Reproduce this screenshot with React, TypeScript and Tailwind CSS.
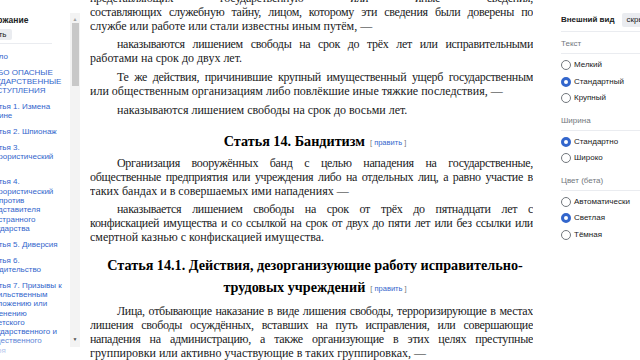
import React from "react";

type TocItem = { level: 1 | 2; lines: string[] };

const toc: TocItem[] = [
  { level: 1, lines: ["Начало"] },
  { level: 1, lines: ["ОСОБО ОПАСНЫЕ", "ГОСУДАРСТВЕННЫЕ", "ПРЕСТУПЛЕНИЯ"] },
  { level: 2, lines: ["Статья 1. Измена", "Родине"] },
  { level: 2, lines: ["Статья 2. Шпионаж"] },
  { level: 2, lines: ["Статья 3.", "Террористический", "акт"] },
  {
    level: 2,
    lines: ["Статья 4.", "Террористический", "акт против", "представителя", "иностранного", "государства"],
  },
  { level: 2, lines: ["Статья 5. Диверсия"] },
  { level: 2, lines: ["Статья 6.", "Вредительство"] },
  {
    level: 2,
    lines: [
      "Статья 7. Призывы к",
      "насильственным",
      "низложению или",
      "изменению",
      "советского",
      "государственного и",
      "общественного",
      "строя",
    ],
  },
];

function Sidebar() {
  return (
    <aside className="flex h-[360px] w-[80px] shrink-0 overflow-hidden font-['Liberation_Sans',Arial,sans-serif] leading-none">
      <div className="relative flex-1 overflow-hidden">
        <div className="-ml-[24px] w-[94px] pt-[14px]">
          <div className="text-[8.5px] font-bold leading-[12px] text-[#202122]">Содержание</div>
          <div className="mt-[3px] h-[11px] w-fit rounded-[2px] bg-[#eaecf0] px-[5px] text-[8px] leading-[11px] text-[#202122]">
            скрыть
          </div>
          <div className="mt-[3px] mr-[18px] border-b border-[#eaecf0]" />
          <ul className="mt-[8px] flex flex-col gap-[6.5px] text-[8px] leading-[9.3px] text-[#3366cc]">
            {toc.map((item, i) => (
              <li key={i} className={item.level === 2 ? "pl-[9px]" : "pl-[4px]"}>
                {item.lines.map((l, j) => (
                  <div key={j} className="whitespace-nowrap">
                    {l}
                  </div>
                ))}
              </li>
            ))}
          </ul>
        </div>
        <div className="absolute bottom-0 left-0 h-[24px] w-full bg-gradient-to-b from-white/0 to-white" />
      </div>
      <div className="mt-[13px] flex h-[334px] w-[10px] flex-col items-center bg-[#f3f3f3]">
        <span className="mt-[3px] text-[5px] leading-[6px] text-[#a3a3a3]">▲</span>
        <div className="mt-[1px] h-[63px] w-[7px] bg-[#c8c8c8]" />
        <div className="flex-1" />
        <span className="mb-[5px] text-[5px] leading-[6px] text-[#505050]">▼</span>
      </div>
    </aside>
  );
}

function Line({ children, indent, last }: { children: React.ReactNode; indent?: boolean; last?: boolean }) {
  return (
    <div
      className={
        "h-[14px] overflow-hidden leading-[14px] " +
        (indent ? "pl-[27px] " : "") +
        (last ? "text-left" : "text-justify tracking-[-0.3px] [text-align-last:justify]")
      }
    >
      {children}
    </div>
  );
}

function Edit() {
  return (
    <span className="ml-[5px] align-[1px] font-['Liberation_Sans',Arial,sans-serif] text-[7.5px] leading-[0] font-normal text-[#72777d]">
      [ <span className="text-[#3366cc]">править</span> ]
    </span>
  );
}

function Article() {
  return (
    <main className="ml-[10px] w-[443px] shrink-0 font-['Liberation_Serif','Times_New_Roman',serif] text-[12px] text-[#202122]">
      <div className="-mt-[9px]">
        <Line>представляющих государственную или иные сведения,</Line>
        <Line>составляющих служебную тайну, лицом, которому эти сведения были доверены по</Line>
        <Line last>службе или работе или стали известны иным путём, —</Line>
      </div>
      <div className="mt-[4px]">
        <Line indent>наказываются лишением свободы на срок до трёх лет или исправительными</Line>
        <Line last>работами на срок до двух лет.</Line>
      </div>
      <div className="mt-[5px]">
        <Line indent>Те же действия, причинившие крупный имущественный ущерб государственным</Line>
        <Line last>или общественным организациям либо повлёкшие иные тяжкие последствия, —</Line>
      </div>
      <div className="mt-[5px]">
        <Line indent last>
          наказываются лишением свободы на срок до восьми лет.
        </Line>
      </div>
      <h2 className="mt-[13px] h-[22px] pl-[7px] text-center text-[14.2px] font-bold leading-[22px] text-[#000]">
        Статья 14. Бандитизм
        <Edit />
      </h2>
      <div className="mt-[4px]">
        <Line indent>Организация вооружённых банд с целью нападения на государственные,</Line>
        <Line>общественные предприятия или учреждения либо на отдельных лиц, а равно участие в</Line>
        <Line last>таких бандах и в совершаемых ими нападениях —</Line>
      </div>
      <div className="mt-[4px]">
        <Line indent>наказывается лишением свободы на срок от трёх до пятнадцати лет с</Line>
        <Line>конфискацией имущества и со ссылкой на срок от двух до пяти лет или без ссылки или</Line>
        <Line last>смертной казнью с конфискацией имущества.</Line>
      </div>
      <h2 className="mt-[10px] pl-[7px] text-center text-[14.2px] font-bold leading-[22px] text-[#000]">
        <div className="h-[22px] whitespace-nowrap">Статья 14.1. Действия, дезорганизующие работу исправительно-</div>
        <div className="h-[22px]">
          трудовых учреждений
          <Edit />
        </div>
      </h2>
      <div className="mt-[6px]">
        <Line indent>Лица, отбывающие наказание в виде лишения свободы, терроризирующие в местах</Line>
        <Line>лишения свободы осуждённых, вставших на путь исправления, или совершающие</Line>
        <Line>нападения на администрацию, а также организующие в этих целях преступные</Line>
        <Line last>группировки или активно участвующие в таких группировках, —</Line>
      </div>
    </main>
  );
}

function Radio({ checked, label }: { checked?: boolean; label: string }) {
  return (
    <div className="flex h-[16.5px] items-center gap-[3px]">
      <span
        className={
          checked
            ? "h-[10px] w-[10px] shrink-0 rounded-full border-[3px] border-[#3366cc] bg-white"
            : "h-[10px] w-[10px] shrink-0 rounded-full border border-[#72777d] bg-white"
        }
      />
      <span className="whitespace-nowrap">{label}</span>
    </div>
  );
}

function Section({ title, first, children }: { title: string; first?: boolean; children: React.ReactNode }) {
  return (
    <div className={first ? "mt-[6px]" : "mt-[8px]"}>
      <div className="border-b border-[#eaecf0] pb-[3px] leading-[12px] text-[#72777d]">{title}</div>
      <div className="mt-[3px]">{children}</div>
    </div>
  );
}

function Appearance() {
  return (
    <aside className="ml-[22px] flex-1 overflow-hidden pl-[6px] pt-[13px] font-['Liberation_Sans',Arial,sans-serif] text-[8px] text-[#202122]">
      <div className="w-[120px]">
        <div className="flex h-[14px] items-center gap-[7px]">
          <span className="font-bold">Внешний вид</span>
          <span className="flex h-[14px] items-center rounded-[2px] bg-[#eaecf0] px-[5px]">скрыть</span>
        </div>
        <div className="mt-[4px] border-b border-[#eaecf0]" />
        <Section title="Текст" first>
          <Radio label="Мелкий" />
          <Radio label="Стандартный" checked />
          <Radio label="Крупный" />
        </Section>
        <Section title="Ширина">
          <Radio label="Стандартно" checked />
          <Radio label="Широко" />
        </Section>
        <Section title="Цвет (бета)">
          <Radio label="Автоматически" />
          <Radio label="Светлая" checked />
          <Radio label="Тёмная" />
        </Section>
      </div>
    </aside>
  );
}

export default function App() {
  return (
    <div className="flex h-[360px] w-[640px] overflow-hidden bg-white">
      <Sidebar />
      <Article />
      <Appearance />
    </div>
  );
}
